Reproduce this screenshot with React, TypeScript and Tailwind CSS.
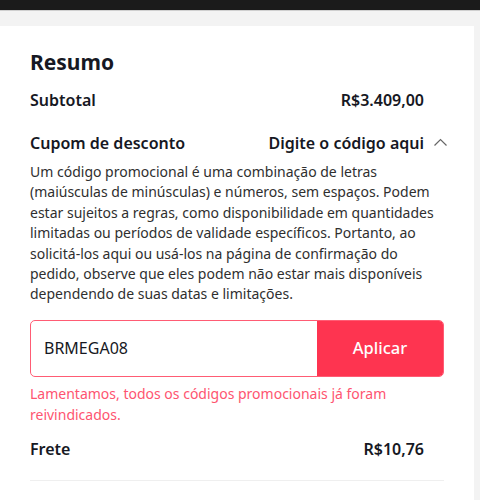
import React from "react";

export default function App() {
  const font = { fontFamily: "'Noto Sans', sans-serif" };
  return (
    <div className="w-[480px] h-[500px] bg-[#f3f3f3] overflow-hidden" style={font}>
      <div className="h-[11px] bg-[#1b1b1b] border-b border-[#cfcfcf]" />
      <div className="mt-[15px] w-[474px] bg-white pl-[30px] pr-[30px] pt-[20px] pb-[20px] text-[#161823]">
        <h2 className="text-[21px] font-bold leading-[32px] text-[#161823]">Resumo</h2>
        <div className="mt-[10px] flex justify-between items-center pr-[20px] h-[24px]">
          <span className="text-[16px] font-semibold">Subtotal</span>
          <span className="text-[16px] font-semibold">R$3.409,00</span>
        </div>
        <div className="mt-[19px] flex justify-between items-center h-[24px] mr-[-4px]">
          <span className="text-[16px] font-semibold">Cupom de desconto</span>
          <span className="flex items-center gap-[9px]">
            <span className="text-[16px] font-semibold">Digite o código aqui</span>
            <svg width="15" height="14" viewBox="0 0 15 14" fill="none">
              <path d="M1.5 9.5 L7.5 3.5 L13.5 9.5" stroke="#666" strokeWidth="1.2" />
            </svg>
          </span>
        </div>
        <p className="mt-[7px] text-[14px] leading-[20.4px] text-[#2f2f2f] whitespace-nowrap">
          Um código promocional é uma combinação de letras<br />
          (maiúsculas de minúsculas) e números, sem espaços. Podem<br />
          estar sujeitos a regras, como disponibilidade em quantidades<br />
          limitadas ou períodos de validade específicos. Portanto, ao<br />
          solicitá-los aqui ou usá-los na página de confirmação do<br />
          pedido, observe que eles podem não estar mais disponíveis<br />
          dependendo de suas datas e limitações.
        </p>
        <div className="mt-[15px] flex h-[57px] rounded-[5px] border border-[#ff5c74] overflow-hidden">
          <div className="flex-1 flex items-center pl-[13px] text-[16px] text-[#161823]">BRMEGA08</div>
          <button className="w-[126px] bg-[#fe3450] text-white text-[16.5px] font-medium">Aplicar</button>
        </div>
        <p className="mt-[6px] text-[14px] leading-[21px] text-[#fe5470]">
          Lamentamos, todos os códigos promocionais já foram<br />reivindicados.
        </p>
        <div className="mt-[12px] flex justify-between items-center pr-[20px] h-[24px]">
          <span className="text-[16px] font-semibold">Frete</span>
          <span className="text-[16px] font-semibold">R$10,76</span>
        </div>
        <div className="mt-[19px] h-px bg-[#efefef]" />
      </div>
    </div>
  );
}
